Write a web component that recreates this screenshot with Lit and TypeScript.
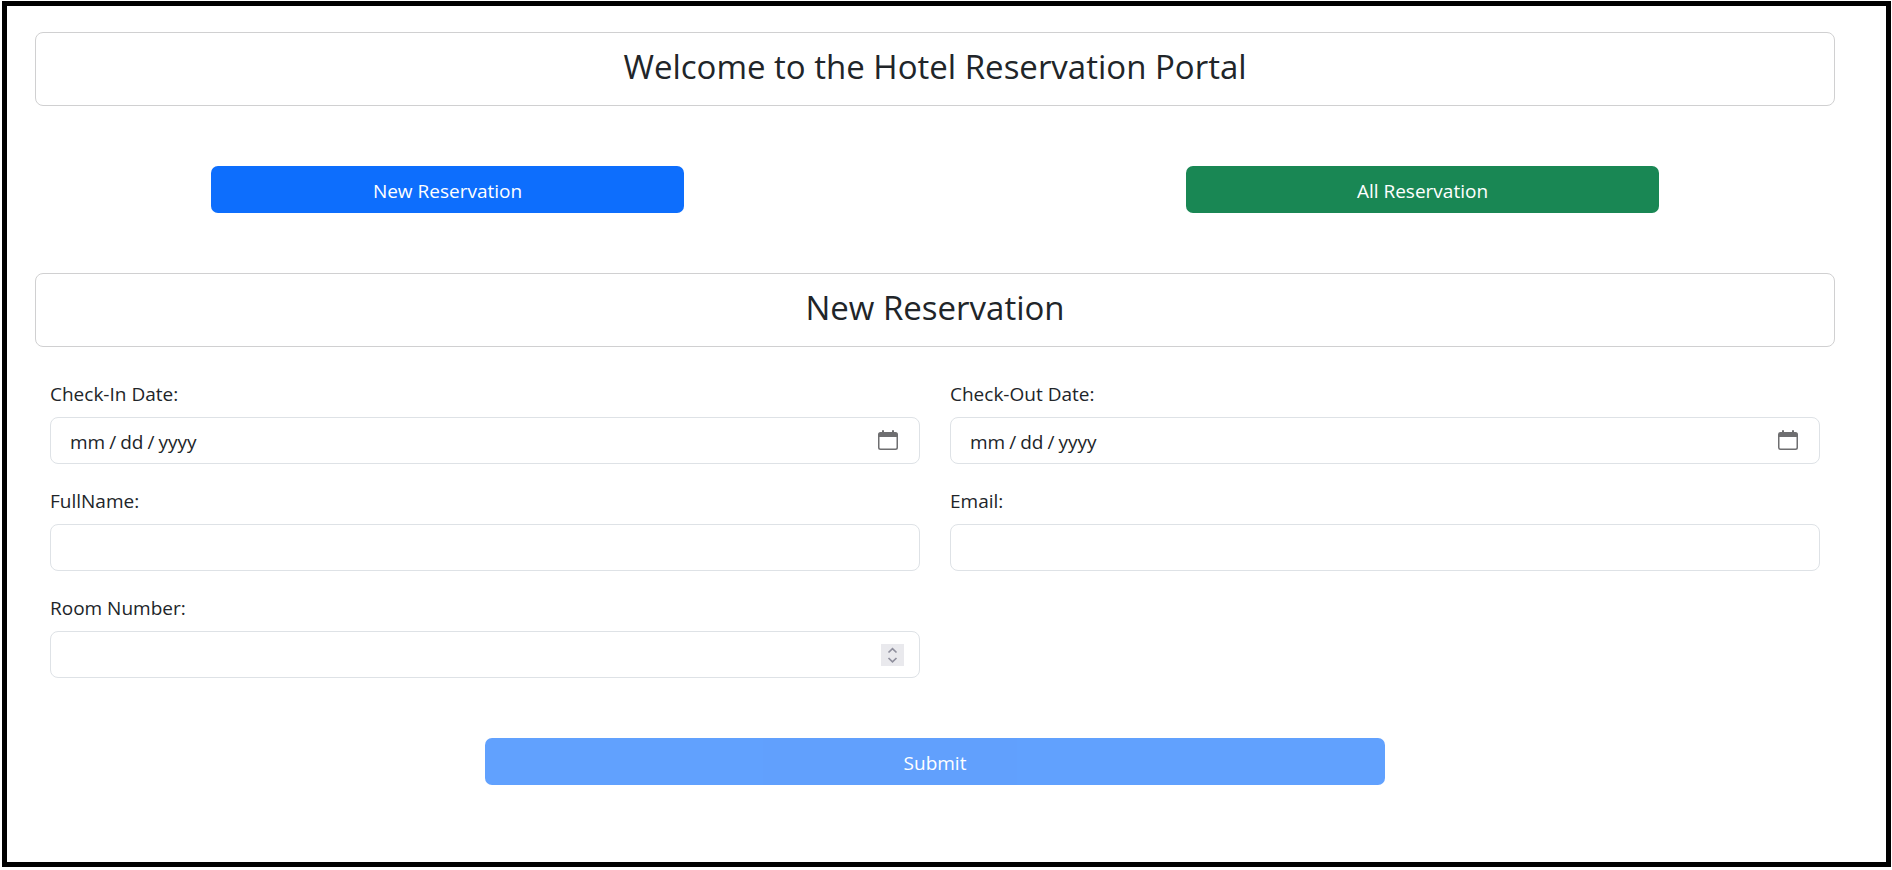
import { LitElement, html, css, svg } from "lit";
import { customElement, state } from "lit/decorators.js";

const calendarIcon = html`<svg class="icon calendar" viewBox="0 0 20 20" aria-hidden="true">
  ${svg`<path fill="#6e6e70" fill-rule="evenodd" d="M4 1a1 1 0 0 1 2 0v1h8V1a1 1 0 0 1 2 0v1h1.500a2.500 2.500 0 0 1 2.500 2.500V17.500a2.500 2.500 0 0 1-2.500 2.500H2.500A2.500 2.500 0 0 1 0 17.500V4.500A2.500 2.500 0 0 1 2.500 2H4zM1.500 7v10.500a1 1 0 0 0 1 1h15a1 1 0 0 0 1-1V7z"/>`}
</svg>`;

const stepperIcon = html`<svg class="icon stepper" viewBox="0 0 23 22" aria-hidden="true">
  ${svg`<rect width="23" height="22" fill="#e9e9ed"/>
  <path d="M7.500 8.500l4-3.800 4 3.800M7.500 14l4 3.800 4-3.800" fill="none" stroke="#8f8f9d" stroke-width="1.700"/>`}
</svg>`;

@customElement("app-root")
export class AppRoot extends LitElement {
  static styles = css`
    :host {
      display: flex;
      box-sizing: border-box;
      min-height: 100vh;
      padding: 1px 1px 3px 2px;
      background: #fff;
      color: #212529;
      font: 19px/30px "Segoe UI", "Open Sans", "Noto Sans", sans-serif;
    }
    *,
    *::before,
    *::after {
      box-sizing: border-box;
    }
    .frame {
      flex: 1;
      min-width: 0;
      border: 5px solid #000;
      padding: 26px 51px 26px 28px;
    }
    .card {
      border: 1px solid #d0d0d1;
      border-radius: 8px;
      padding: 13px 15px 17px;
      text-align: center;
    }
    .title {
      margin: 0;
      font-size: 33px;
      line-height: 42px;
      font-weight: 400;
    }
    .tabs {
      display: grid;
      grid-template-columns: 176fr 473fr 502fr 473fr 176fr;
      padding: 60px 0;
    }
    .btn {
      height: 47px;
      border: 0;
      border-radius: 7px;
      padding: 2px 15px 0;
      color: #fff;
      font: inherit;
      cursor: pointer;
    }
    .btn.primary {
      grid-column: 2;
      background: #0d6efd;
    }
    .btn.success {
      grid-column: 4;
      background: #198754;
    }
    .fields {
      display: grid;
      grid-template-columns: 1fr 1fr;
      gap: 22px 30px;
      padding: 32px 15px 60px;
    }
    .field {
      display: grid;
      gap: 8px;
      min-width: 0;
    }
    .control {
      display: grid;
      align-items: center;
    }
    .control > * {
      grid-area: 1 / 1;
    }
    .input {
      width: 100%;
      height: 47px;
      border: 1px solid #dee2e6;
      border-radius: 8px;
      padding: 2px 15px 0;
      background: #fff;
      color: inherit;
      font: inherit;
      appearance: none;
    }
    .icon {
      justify-self: end;
      pointer-events: none;
    }
    .calendar {
      width: 20px;
      height: 20px;
      margin: 0 22px 2px 0;
    }
    .stepper {
      width: 23px;
      height: 22px;
      margin-right: 16px;
    }
    .input::-webkit-datetime-edit {
      padding: 0 4px;
    }
    .input::-webkit-datetime-edit-text {
      padding: 0 4px;
    }
    .input::-webkit-datetime-edit-month-field,
    .input::-webkit-datetime-edit-day-field,
    .input::-webkit-datetime-edit-year-field {
      padding: 0;
    }
    .input::-webkit-calendar-picker-indicator,
    .input::-webkit-inner-spin-button {
      opacity: 0;
    }
    .submit-row {
      display: flex;
      justify-content: center;
    }
    .btn.submit {
      width: 50%;
      background: #0d6efd;
      opacity: 0.65;
      cursor: default;
    }
  `;

  @state() private view: "new" | "all" = "new";

  private field(id: string, label: string, type: string, icon: unknown = "") {
    return html`<div class="field">
      <label for=${id}>${label}</label>
      <div class="control"><input class="input" id=${id} name=${id} type=${type} />${icon}</div>
    </div>`;
  }

  render() {
    return html`<main class="frame">
      <header class="card"><h1 class="title">Welcome to the Hotel Reservation Portal</h1></header>
      <nav class="tabs">
        <button class="btn primary" type="button" @click=${() => (this.view = "new")}>New Reservation</button>
        <button class="btn success" type="button" @click=${() => (this.view = "all")}>All Reservation</button>
      </nav>
      <div class="card">
        <h2 class="title">${this.view === "new" ? "New Reservation" : "All Reservation"}</h2>
      </div>
      ${this.view === "new"
        ? html`<form>
            <div class="fields">
              ${this.field("checkIn", "Check-In Date:", "date", calendarIcon)}
              ${this.field("checkOut", "Check-Out Date:", "date", calendarIcon)}
              ${this.field("fullName", "FullName:", "text")}
              ${this.field("email", "Email:", "email")}
              ${this.field("roomNumber", "Room Number:", "number", stepperIcon)}
            </div>
            <div class="submit-row">
              <button class="btn submit" type="submit" disabled>Submit</button>
            </div>
          </form>`
        : ""}
    </main>`;
  }
}
